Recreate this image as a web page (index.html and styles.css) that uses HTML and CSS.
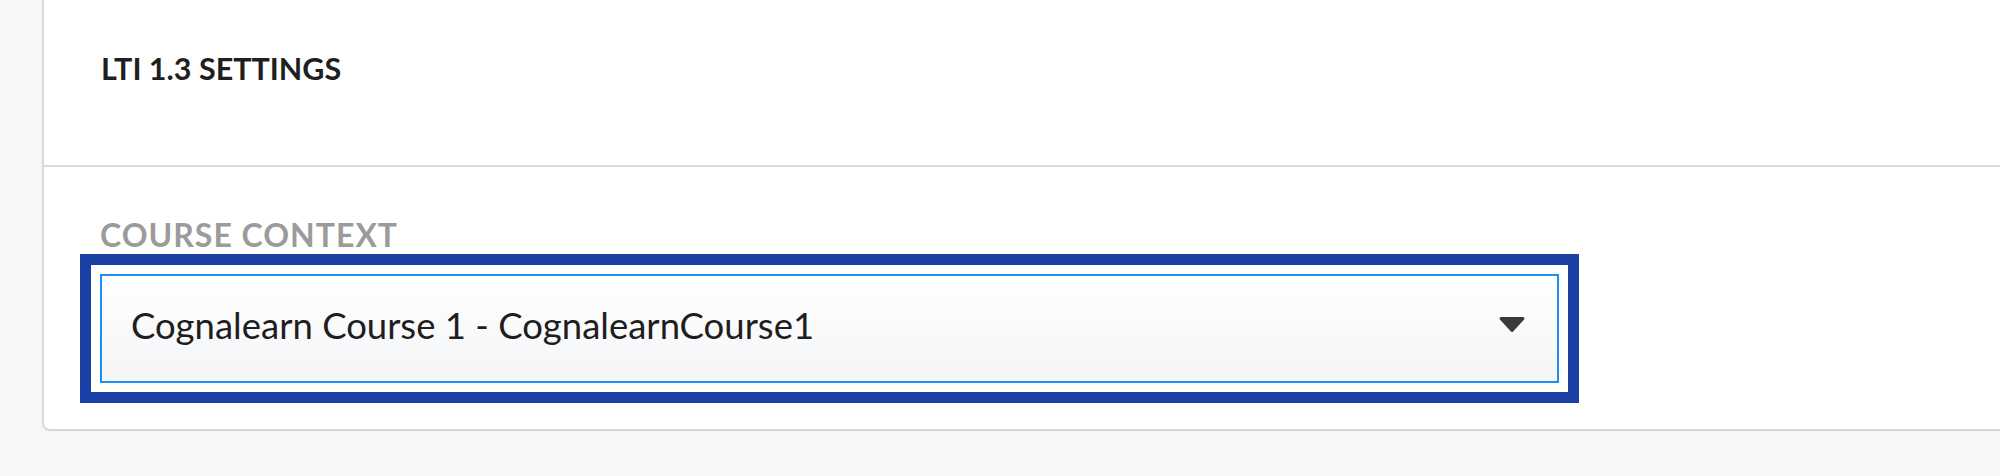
FILE: index.html
```html
<!DOCTYPE html>
<html lang="en">
<head>
<meta charset="utf-8">
<title>LTI 1.3 Settings</title>
<link rel="stylesheet" href="styles.css">
</head>
<body>
<div class="page">
  <section class="card">
    <header class="card-header">
      <h2 class="card-title">LTI 1.3 SETTINGS</h2>
    </header>
    <div class="card-body">
      <label class="field-label">COURSE CONTEXT</label>
      <div class="focus-ring">
        <div class="select" role="combobox" aria-expanded="false">
          <span class="select-value">Cognalearn Course 1 - CognalearnCourse1</span>
          <svg class="select-arrow" width="28" height="17" viewBox="0 0 28 17" aria-hidden="true">
            <path d="M3 2.5 L25 2.5 L14 14.5 Z" fill="#3b3b3d" stroke="#3b3b3d" stroke-width="3" stroke-linejoin="round"/>
          </svg>
        </div>
      </div>
    </div>
  </section>
</div>
</body>
</html>
```
FILE: styles.css
```css
html, body {
  margin: 0;
  padding: 0;
}
body {
  background: #f6f7f9;
  font-family: Lato, "Open Sans", "Liberation Sans", sans-serif;
}
.page {
  padding-left: 42px;
}
.card {
  background: #ffffff;
  border-left: 2px solid #dadada;
  border-bottom: 2px solid #d6d6d6;
  border-bottom-left-radius: 8px;
  box-shadow: 0 1px 3px rgba(0, 0, 0, 0.04);
}
.card-header {
  box-sizing: border-box;
  height: 167px;
  border-bottom: 2px solid #dcdcdc;
  padding-left: 57px;
}
.card-title {
  margin: 0;
  padding-top: 50px;
  font-size: 30.5px;
  line-height: 36px;
  font-weight: 700;
  color: #1f1f1f;
}
.card-body {
  padding: 50px 0 26px 36px;
}
.field-label {
  display: block;
  padding-left: 20px;
  font-size: 32px;
  letter-spacing: 1px;
  line-height: 36px;
  height: 37px;
  font-weight: 700;
  color: #9b9b9b;
}
.focus-ring {
  width: 1499px;
  box-sizing: border-box;
  border: 11px solid #1b40a6;
  padding: 9px;
  background: #ffffff;
}
.select {
  height: 109px;
  box-sizing: border-box;
  border: 2.5px solid #1e90f0;
  background: linear-gradient(#ffffff, #f4f5f7);
  display: flex;
  align-items: center;
  justify-content: space-between;
  padding: 0 31px 8px 29px;
}
.select-value {
  font-size: 36.5px;
  line-height: 40px;
  color: #1e1e1e;
}
.select-arrow {
  display: block;
}
```
